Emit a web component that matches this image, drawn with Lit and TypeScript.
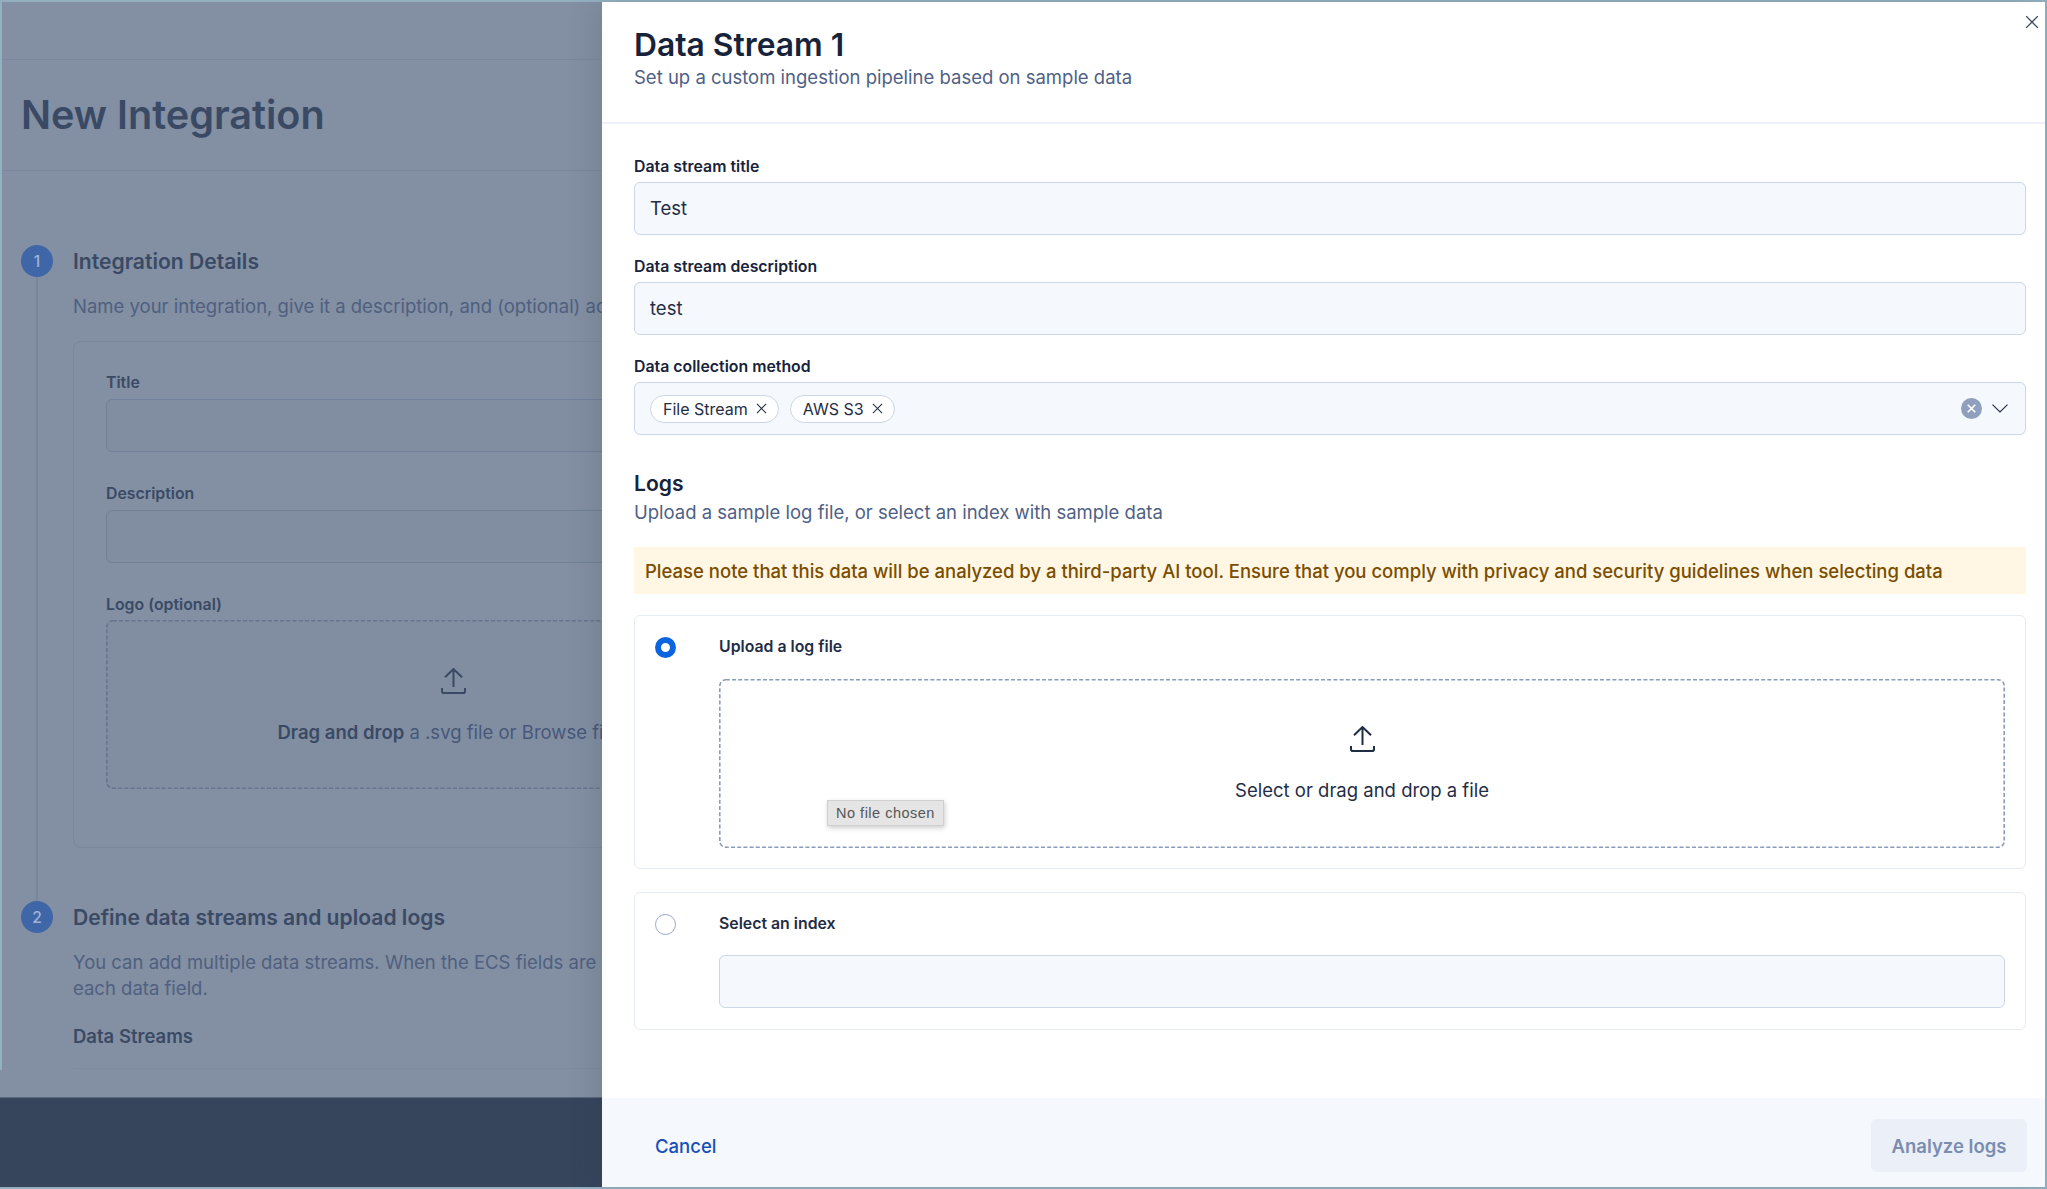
import { LitElement, css, html } from "lit";
import { customElement } from "lit/decorators.js";

const uploadIcon = html`<svg class="upload" viewBox="0 0 25 26" fill="none" stroke="currentColor" stroke-width="2">
  <path d="M12.5 19V1.2M4 9.2l8.5-8.2 8.5 8.2" />
  <path d="M1 20v3.2A1.8 1.8 0 0 0 2.8 25h19.4a1.8 1.8 0 0 0 1.8-1.8V20" />
</svg>`;

const crossIcon = html`<svg viewBox="0 0 12 12" fill="none" stroke="currentColor" stroke-width="1.1">
  <path d="M1 1l10 10M11 1L1 11" />
</svg>`;

// css dashed borders come out too coarse at this weight, so the dropzones draw their own
const dashedEdge = html`<svg class="dash" aria-hidden="true"><rect rx="6" ry="6" /></svg>`;

@customElement("app-root")
export class AppRoot extends LitElement {
  static styles = css`
    :host {
      display: block;
      width: 2047px;
      height: 1189px;
      overflow: hidden;
      background: #93b0c0;
      font-family: Inter, "Noto Sans", sans-serif;
      color: #1f2d45;
    }
    .frame {
      display: flex;
      height: 1185px;
      padding: 2px 2px 2px 0;
    }
    .dash {
      position: absolute;
      inset: 0;
      width: 100%;
      height: 100%;
      fill: none;
      stroke: #8a9abb;
      stroke-width: 1.6;
      stroke-dasharray: 4 2.2;
    }
    .dash rect {
      x: 0.8px;
      y: 0.8px;
      width: calc(100% - 1.6px);
      height: calc(100% - 1.6px);
    }

    /* dimmed page behind the flyout */
    .page {
      width: 602px;
      flex: none;
      display: flex;
      flex-direction: column;
      overflow: hidden;
      background: #838fa2;
      color: #3a4a65;
      white-space: nowrap;
    }
    .page-main {
      height: 1068px;
      flex: none;
      box-sizing: border-box;
      border-left: 2px solid #93b0c0;
    }
    .topbar {
      height: 57px;
      border-bottom: 1px solid #7a879c;
    }
    .page-title {
      height: 111px;
      box-sizing: border-box;
      padding-left: 19px;
      display: flex;
      align-items: center;
      border-bottom: 1px solid #7a879c;
      font-size: 39.6px;
      font-weight: 600;
    }
    .steps {
      padding: 74px 0 0 19px;
      width: 900px;
    }
    .step {
      display: flex;
      gap: 20px;
    }
    .marker {
      width: 32px;
      flex: none;
      display: flex;
      flex-direction: column;
      align-items: center;
    }
    .num {
      width: 32px;
      height: 32px;
      flex: none;
      border-radius: 50%;
      background: #3f66a6;
      color: #9fb4d6;
      font-size: 15.6px;
      font-weight: 500;
      display: flex;
      align-items: center;
      justify-content: center;
    }
    .rail {
      flex: 1;
      width: 2px;
      background: #78869c;
    }
    .step-title {
      height: 32px;
      display: flex;
      align-items: center;
      font-size: 21.1px;
      font-weight: 600;
    }
    .step-desc {
      margin-top: 16px;
      font-size: 18.5px;
      line-height: 26px;
      color: #4f6080;
    }
    .card {
      width: 760px;
      box-sizing: border-box;
      margin: 22px 0 53px;
      padding: 31px 32px 58px;
      border: 1px solid #7a889d;
      border-radius: 8px;
    }
    .page-label {
      display: block;
      height: 20px;
      line-height: 20px;
      margin-bottom: 6px;
      font-size: 15.85px;
      font-weight: 600;
    }
    .page-input {
      height: 53px;
      box-sizing: border-box;
      margin-bottom: 32px;
      border: 1px solid #71809b;
      border-radius: 6px;
      background: #818ea2;
    }
    .page-drop {
      position: relative;
      height: 169px;
      box-sizing: border-box;
      margin-top: -1px;
      padding-top: 48px;
      border-radius: 6px;
      display: flex;
      flex-direction: column;
      align-items: center;
      gap: 25px;
      font-size: 18.5px;
      line-height: 26px;
      background: #818ea2;
    }
    .page-drop .dash {
      stroke: #66758f;
    }
    .page-drop span {
      color: #47587a;
    }
    .page-drop b {
      font-weight: 600;
      color: #3a4a65;
    }
    .streams-label {
      margin-top: 23px;
      height: 24px;
      line-height: 24px;
      font-size: 18.5px;
      font-weight: 600;
      padding-bottom: 20px;
      border-bottom: 1px solid #7d8a9f;
    }
    .page-bottom {
      flex: 1;
      display: flex;
      flex-direction: column;
      justify-content: flex-end;
    }
    .bar {
      height: 90px;
      background: #36445c;
      border-top: 1px solid #5a6980;
      box-sizing: border-box;
    }

    /* flyout */
    .flyout {
      flex: 1;
      min-width: 0;
      position: relative;
      display: flex;
      flex-direction: column;
      background: #fff;
      box-shadow: -6px 0 28px rgba(45, 55, 75, 0.16);
    }
    .close {
      position: absolute;
      top: 13px;
      right: 6px;
      width: 14px;
      height: 14px;
      color: #36445c;
    }
    .close svg {
      display: block;
      width: 14px;
      height: 14px;
    }
    .head {
      height: 122px;
      box-sizing: border-box;
      padding: 24px 32px 0;
      border-bottom: 2px solid #eef1f7;
    }
    h1 {
      margin: 0;
      font-size: 31.8px;
      line-height: 38px;
      font-weight: 600;
      color: #17233a;
    }
    .sub {
      font-size: 18.5px;
      line-height: 26px;
      color: #4f6184;
    }
    .body {
      flex: 1;
      padding: 33px 19px 0 32px;
    }
    .label {
      display: block;
      height: 20px;
      line-height: 20px;
      margin-bottom: 5px;
      font-size: 15.85px;
      font-weight: 600;
      color: #17233a;
    }
    .input {
      height: 53px;
      box-sizing: border-box;
      margin-bottom: 22px;
      padding: 0 15px;
      border: 1px solid #cbd6e7;
      border-radius: 6px;
      background: #f5f8fc;
      display: flex;
      align-items: center;
      font-size: 18.5px;
    }
    .input.text {
      padding-bottom: 2px;
    }
    .input.select {
      margin-bottom: 0;
    }
    .chips {
      display: flex;
      gap: 11px;
      flex: 1;
    }
    .chip {
      height: 28px;
      box-sizing: border-box;
      padding: 0 11px 0 12px;
      display: flex;
      align-items: center;
      gap: 8px;
      border: 1px solid #cbd6e7;
      border-radius: 14px;
      background: #fff;
      font-size: 16px;
    }
    .chip svg {
      width: 11px;
      height: 11px;
    }
    .clear {
      width: 21px;
      height: 21px;
      border-radius: 50%;
      background: #8f9fbd;
      color: #fff;
      display: flex;
      align-items: center;
      justify-content: center;
    }
    .clear svg {
      width: 9px;
      height: 9px;
      stroke-width: 2.2;
    }
    .chevron {
      width: 16px;
      height: 9px;
      margin: 0 2px 0 10px;
    }
    h2 {
      margin: 35px 0 0;
      font-size: 21.1px;
      line-height: 28px;
      font-weight: 600;
      color: #17233a;
    }
    .logs-sub {
      margin-top: 1px;
    }
    .warning {
      height: 47px;
      margin-top: 22px;
      padding-left: 11px;
      display: flex;
      align-items: center;
      background: #fff6e3;
      color: #7a4e00;
      font-size: 18.5px;
      font-weight: 500;
    }
    .option {
      margin-top: 21px;
      box-sizing: border-box;
      display: flex;
      gap: 43px;
      padding: 21px 20px 20px 20px;
      border: 1px solid #e6ebf3;
      border-radius: 6px;
    }
    .option + .option {
      margin-top: 23px;
      padding-bottom: 21px;
    }
    .radio {
      width: 21px;
      height: 21px;
      flex: none;
      box-sizing: border-box;
      border: 1px solid #98a8c8;
      border-radius: 50%;
      background: #fff;
    }
    .radio.on {
      border: 6.5px solid #0d64e0;
    }
    .option-body {
      flex: 1;
      min-width: 0;
    }
    .option-label {
      height: 20px;
      line-height: 20px;
      font-size: 15.85px;
      font-weight: 600;
      color: #1f2d45;
    }
    .drop {
      position: relative;
      height: 169px;
      box-sizing: border-box;
      margin-top: 22px;
      padding-top: 47px;
      display: flex;
      flex-direction: column;
      align-items: center;
      gap: 25px;
      font-size: 18.5px;
      line-height: 26px;
    }
    .upload {
      display: block;
      width: 25px;
      height: 26px;
      flex: none;
    }
    .tip {
      position: absolute;
      left: 108px;
      top: 121px;
      width: 117px;
      height: 26px;
      box-sizing: border-box;
      border: 1px solid #cfcfcf;
      background: #e5e5e5;
      box-shadow: 1px 2px 5px rgba(0, 0, 0, 0.2);
      color: #555;
      font-family: "Liberation Sans", sans-serif;
      font-size: 14.5px;
      letter-spacing: 0.5px;
      line-height: 24px;
      text-align: center;
    }
    .index-input {
      height: 53px;
      margin: 21px 0 0;
    }
    .foot {
      height: 89px;
      flex: none;
      box-sizing: border-box;
      padding: 6px 18px 0 53px;
      background: #f5f8fc;
      display: flex;
      align-items: center;
      justify-content: space-between;
      font-size: 18.5px;
      font-weight: 500;
    }
    .cancel {
      color: #1750ba;
    }
    .analyze {
      width: 156px;
      height: 53px;
      border-radius: 6px;
      background: #ebeff7;
      color: #7a8db0;
      font-weight: 600;
      display: flex;
      align-items: center;
      justify-content: center;
    }
  `;

  renderPage() {
    return html`
      <section class="page">
        <div class="page-main">
          <div class="topbar"></div>
          <div class="page-title">New Integration</div>
          <div class="steps">
            <div class="step">
              <div class="marker"><div class="num">1</div><div class="rail"></div></div>
              <div>
                <div class="step-title">Integration Details</div>
                <div class="step-desc">Name your integration, give it a description, and (optional) add a logo</div>
                <div class="card">
                  <span class="page-label">Title</span>
                  <div class="page-input"></div>
                  <span class="page-label">Description</span>
                  <div class="page-input"></div>
                  <span class="page-label">Logo (optional)</span>
                  <div class="page-drop">
                    ${dashedEdge} ${uploadIcon}
                    <span><b>Drag and drop</b> a .svg file or Browse files</span>
                  </div>
                </div>
              </div>
            </div>
            <div class="step">
              <div class="marker"><div class="num">2</div></div>
              <div>
                <div class="step-title">Define data streams and upload logs</div>
                <div class="step-desc">
                  You can add multiple data streams. When the ECS fields are mapped, review<br />each data field.
                </div>
                <div class="streams-label">Data Streams</div>
              </div>
            </div>
          </div>
        </div>
        <div class="page-bottom"><div class="bar"></div></div>
      </section>
    `;
  }

  render() {
    return html`
      <div class="frame">
        ${this.renderPage()}
        <aside class="flyout">
          <div class="close">${crossIcon}</div>
          <header class="head">
            <h1>Data Stream 1</h1>
            <div class="sub">Set up a custom ingestion pipeline based on sample data</div>
          </header>
          <div class="body">
            <span class="label">Data stream title</span>
            <div class="input text">Test</div>
            <span class="label">Data stream description</span>
            <div class="input text">test</div>
            <span class="label">Data collection method</span>
            <div class="input select">
              <div class="chips">
                <span class="chip">File Stream ${crossIcon}</span>
                <span class="chip">AWS S3 ${crossIcon}</span>
              </div>
              <span class="clear">${crossIcon}</span>
              <svg class="chevron" viewBox="0 0 16 9" fill="none" stroke="#1f2d45" stroke-width="1.1">
                <path d="M.5.7L8 8l7.5-7.3" />
              </svg>
            </div>
            <h2>Logs</h2>
            <div class="sub logs-sub">Upload a sample log file, or select an index with sample data</div>
            <div class="warning">
              Please note that this data will be analyzed by a third-party AI tool. Ensure that you comply with privacy and security guidelines when selecting data
            </div>
            <div class="option">
              <div class="radio on"></div>
              <div class="option-body">
                <div class="option-label">Upload a log file</div>
                <div class="drop">
                  ${dashedEdge} ${uploadIcon}
                  <span>Select or drag and drop a file</span>
                  <div class="tip">No file chosen</div>
                </div>
              </div>
            </div>
            <div class="option">
              <div class="radio"></div>
              <div class="option-body">
                <div class="option-label">Select an index</div>
                <div class="input index-input"></div>
              </div>
            </div>
          </div>
          <footer class="foot">
            <span class="cancel">Cancel</span>
            <span class="analyze">Analyze logs</span>
          </footer>
        </aside>
      </div>
    `;
  }
}
